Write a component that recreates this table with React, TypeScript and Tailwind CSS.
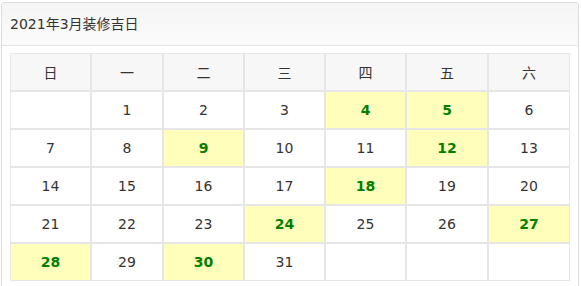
const weekdays = ['日', '一', '二', '三', '四', '五', '六']

// 2021年3月 starts on a Monday
const cells: (number | null)[] = [
  null,
  ...Array.from({ length: 31 }, (_, i) => i + 1),
  null,
  null,
  null,
]

const goodDays = [4, 5, 9, 12, 18, 24, 27, 28, 30]

export default function App() {
  return (
    <div className="min-h-screen bg-white pl-px pt-[2px] font-['DejaVu_Sans','Noto_Sans_CJK_SC',sans-serif] text-[14px] text-[#333]">
      <div className="w-[578px] rounded-[3px] border border-[#dddddd] bg-white">
        {/* Title */}
        <div className="flex h-[43px] items-center rounded-t-[3px] border-b border-[#e2e2e2] bg-gradient-to-b from-[#f5f5f5] to-[#fbfbfb] px-[8px]">
          <span className="mt-[1px]">2021年3月装修吉日</span>
        </div>

        {/* Calendar */}
        <div className="px-[8px] pb-[8px] pt-[7px]">
          <div className="grid grid-cols-[81px_72px_81px_81px_81px_82px_82px]">
            {weekdays.map((d) => (
              <div
                key={d}
                className="flex h-[38px] items-center justify-center border border-[#e6e6e6] bg-[#f7f7f7] font-['Noto_Sans_CJK_SC',sans-serif]"
              >
                {d}
              </div>
            ))}
            {cells.map((day, i) => {
              const good = day !== null && goodDays.includes(day)
              return (
                <div
                  key={i}
                  className={
                    good
                      ? 'flex h-[38px] items-center justify-center border border-[#e6e6e6] bg-[#ffffbb] pt-[1px] font-bold text-[#008000]'
                      : 'flex h-[38px] items-center justify-center border border-[#e6e6e6] bg-white pt-[1px]'
                  }
                >
                  {day}
                </div>
              )
            })}
          </div>
        </div>
      </div>
    </div>
  )
}
